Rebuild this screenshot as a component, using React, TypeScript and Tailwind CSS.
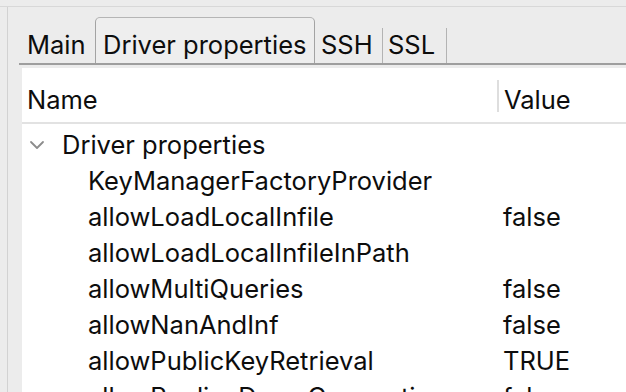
import React from "react";

const rows: { name: string; value: string }[] = [
  { name: "KeyManagerFactoryProvider", value: "" },
  { name: "allowLoadLocalInfile", value: "false" },
  { name: "allowLoadLocalInfileInPath", value: "" },
  { name: "allowMultiQueries", value: "false" },
  { name: "allowNanAndInf", value: "false" },
  { name: "allowPublicKeyRetrieval", value: "TRUE" },
  { name: "allowReplicaDownConnections", value: "false" },
];

function App() {
  return (
    <div
      className="w-[626px] h-[392px] overflow-hidden bg-[#ececec] text-[#0d0d0d] text-[25.5px] leading-none"
      style={{ fontFamily: "Inter, 'Noto Sans', sans-serif" }}
    >
      <div className="h-[6px]" />
      <div className="border-t border-[#d8d8d8] flex h-full">
        <div className="w-[7px] shrink-0" />
        <div className="border-l border-[#d2d2d2] flex-1 pl-[11px] pt-[12px]">
          {/* tabs */}
          <div className="flex items-end h-[46px] border-b-[2px] border-[#9e9e9e]">
            <div className="w-[76px] h-[35px] pl-[8px] pb-[6px] flex items-end">Main</div>
            <div className="w-[220px] h-[46px] pl-[7px] pb-[6px] flex items-end bg-[#eeeeee] border-x border-t border-x-[#a3a3a3] border-t-[#b5b5b5] rounded-t-[5px]">
              Driver properties
            </div>
            <div className="w-[68px] h-[35px] pl-[6px] pb-[6px] flex items-end border-r border-[#b3b3b3]">SSH</div>
            <div className="w-[64px] h-[35px] pl-[5px] pb-[6px] flex items-end border-r border-[#b3b3b3]">SSL</div>
          </div>

          {/* table */}
          <div className="ml-[3px] mt-[3px] bg-white h-full">
            <div className="flex h-[56px] items-center pt-[10px] border-b-[2px] border-[#e2e2e2]">
              <div className="w-[475px] pl-[5px]">Name</div>
              <div className="h-[32px] mt-[-8px] border-l-[2px] border-[#dedede] pl-[5px] pt-[8px] flex items-center">Value</div>
            </div>
            <div className="pt-[3px]">
              <div className="flex h-[36px] items-center">
                <div className="w-[40px] pl-[7px] shrink-0">
                  <svg width="16" height="10" viewBox="0 0 16 10" fill="none">
                    <path d="M2 2l6 6 6-6" stroke="#8c8c8c" strokeWidth="1.8" strokeLinecap="round" strokeLinejoin="round" />
                  </svg>
                </div>
                <div>Driver properties</div>
              </div>
              {rows.map((r) => (
                <div key={r.name} className="flex h-[36px] items-center">
                  <div className="w-[475px] pl-[66px] shrink-0">{r.name}</div>
                  <div className="pl-[6px]">{r.value}</div>
                </div>
              ))}
            </div>
          </div>
        </div>
      </div>
    </div>
  );
}

export default App;
